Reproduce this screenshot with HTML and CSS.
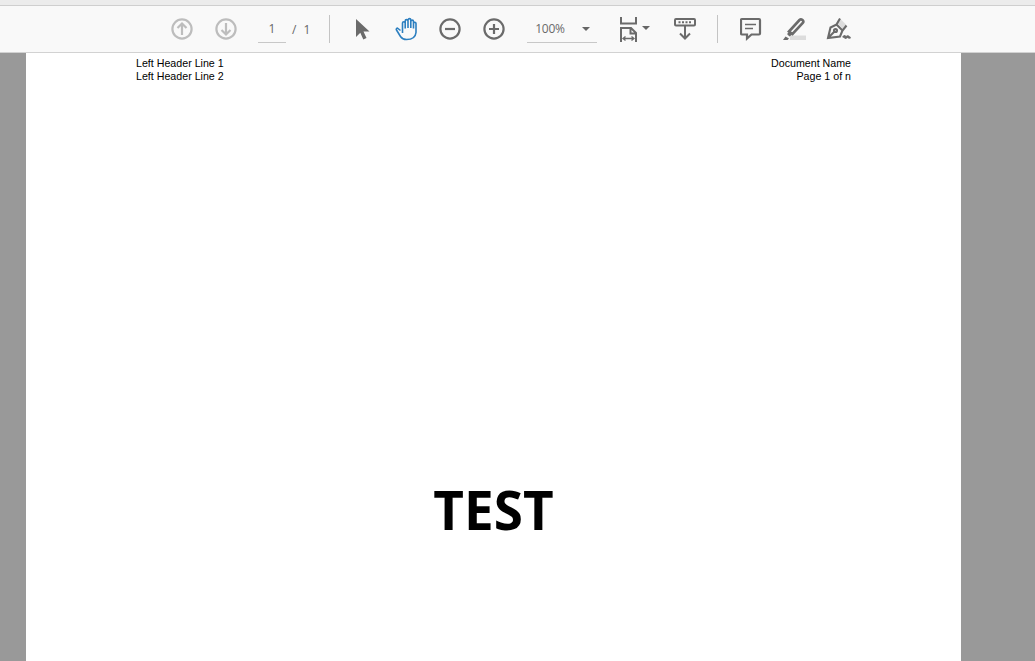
FILE: index.html
```html
<!DOCTYPE html>
<html lang="en">
<head>
<meta charset="utf-8">
<title>PDF viewer</title>
<link rel="stylesheet" href="styles.css">
</head>
<body>
<div class="strip"></div>
<div class="toolbar">
  <svg class="icon up" width="24" height="24" viewBox="0 0 24 24"><circle cx="12" cy="12" r="9.6"/><path d="M12 18V6.500M7.500 11 12 6.500l4.500 4.500"/></svg>
  <svg class="icon down" width="24" height="24" viewBox="0 0 24 24"><circle cx="12" cy="12" r="9.6"/><path d="M12 6v11.500M7.500 13l4.500 4.500 4.500-4.500"/></svg>
  <div class="pagebox">1</div>
  <div class="pagecount"><span>/</span><span>1</span></div>
  <div class="sep sep-a"></div>
  <svg class="cursor" width="16" height="22" viewBox="0 0 16 22"><path class="solid" d="M1 1v18l4.300-4.300 3 6.800 3.200-1.400-3-6.600h6z"/></svg>
  <svg class="hand" width="24" height="24" viewBox="0 0 24 24"><path d="M5.500 13.500 3 11.500c-1-.8-2.200.4-1.500 1.500l4 6.500c1.300 2 3 3 6 3 5 0 9-2 9.500-7V6.500c0-1.700-2.500-1.700-2.500 0V11.500M18.500 11V4.500c0-1.800-2.700-1.800-2.700 0V11M15.800 11V3c0-1.800-2.800-1.800-2.800 0v8M13 11V4c0-1.800-2.800-1.800-2.800 0v7.500M10.200 11.500V6c0-1.700-2.700-1.700-2.700 0v10"/></svg>
  <svg class="icon zoom-out" width="24" height="24" viewBox="0 0 24 24"><circle cx="12" cy="12" r="9.600"/><path d="M7 12h10"/></svg>
  <svg class="icon zoom-in" width="24" height="24" viewBox="0 0 24 24"><circle cx="12" cy="12" r="9.600"/><path d="M7 12h10M12 7v10"/></svg>
  <div class="zoombox"><span>100%</span><i class="caret"></i></div>
  <svg class="fit" width="20" height="25" viewBox="0 0 20 25"><path d="M2 0v6.500h15V0M2 25v-14h10l5 5v9M11.500 11v5.500H17"/><path class="thin" d="M4 21.500h11M6.500 19.500l-2.500 2 2.500 2M12.500 19.500l2.500 2-2.500 2"/></svg>
  <i class="caret caret-fit"></i>
  <svg class="stamp" width="24" height="24" viewBox="0 0 24 24"><rect x="2" y="2" width="20" height="6.500" rx="1"/><path d="M12 9v12.500M7 16.500l5 5 5-5"/><path class="dots" d="M5.500 5.200h13"/></svg>
  <div class="sep sep-b"></div>
  <svg class="comment" width="22" height="24" viewBox="0 0 22 24"><path d="M2 2h17a1 1 0 0 1 1 1v13.500a1 1 0 0 1-1 1h-7.500L7 21.500v-4H2a1 1 0 0 1-1-1V3a1 1 0 0 1 1-1z"/><path class="thin" d="M5 7.500h11M5 11.500h8"/></svg>
  <svg class="highlight" width="24" height="24" viewBox="0 0 24 24"><path class="band" d="M7 18.500h16V23H7z"/><path class="solid" d="M0 23l2.500-3.500 3.500 2-1.500 1.500zM4 17l3-3 3 3-3.500 2.500z"/><path d="M6 14.500 16.500 3c1.800-1.800 5 1 3.300 3L9.500 17z"/></svg>
  <svg class="sign" width="26" height="24" viewBox="0 0 26 24"><path class="band" d="M13.500 1 20 7.500l-3.500 4-6-6z"/><path d="M2 21 4.500 10.500 10.500 7.500l6 6-2.500 6zM2 21 8.500 14.500M10.500 7.500 14 1.500M16.500 13.500 20.500 8.500"/><circle cx="9.500" cy="13.500" r="1.500"/><path d="M17 20.500c1-1.500 2-2 2-.5s1.500.8 2-.2 1.500-.6 1.500.3 1 .7 2 0"/></svg>
</div>
<main class="viewer">
  <section class="page">
    <header class="page-head">
      <div>Left Header Line 1<br>Left Header Line 2</div>
      <div class="right">Document Name<br>Page 1 of n</div>
    </header>
    <h1 class="title">TEST</h1>
  </section>
</main>
</body>
</html>
```
FILE: styles.css
```css
* { box-sizing: border-box; }
html, body { margin: 0; height: 100%; overflow: hidden; }
body { width: 1035px; height: 661px; display: flex; flex-direction: column; background: #999; font-family: "Liberation Sans", Arial, sans-serif; }
.strip { height: 6px; flex: none; background: #ececec; border-bottom: 1px solid #cfcfcf; }
.toolbar { height: 47px; flex: none; display: flex; align-items: center; background: #f9f9f9; border-bottom: 1px solid #d2d2d2; padding-left: 170px; color: #666; }
svg { flex: none; display: block; fill: none; stroke: #6b6b6b; stroke-width: 2.2; }
svg .solid { fill: #6b6b6b; stroke: none; }
svg .thin { stroke-width: 1.3; }
svg .band { fill: #dcdcdc; stroke: none; }
.up, .down { stroke: #bdbdbd; }
.down { margin-left: 20px; }
.pagebox { width: 28px; height: 28px; margin-left: 20px; border-bottom: 1px solid #c8c8c8; text-align: center; font-size: 12px; line-height: 27px; font-family: "Open Sans", sans-serif; }
.pagecount { margin-left: 6px; display: flex; gap: 7px; font-size: 12px; font-family: "Open Sans", sans-serif; }
.sep { width: 1px; height: 28px; background: #c4c4c4; flex: none; }
.sep-a { margin-left: 19px; }
.cursor { margin-left: 25px; stroke: none; }
.hand { margin-left: 24px; stroke: #2c7fc0; stroke-width: 1.6; stroke-linejoin: round; }
.zoom-out { margin-left: 19px; }
.zoom-in { margin-left: 20px; }
.zoombox { width: 70px; height: 28px; margin-left: 21px; border-bottom: 1px solid #c8c8c8; display: flex; align-items: center; justify-content: space-between; padding: 0 7px 0 8px; font-size: 12px; font-family: "Open Sans", sans-serif; color: #6a6a6a; letter-spacing: -0.3px; }
.caret { display: block; width: 0; height: 0; border-left: 4px solid transparent; border-right: 4px solid transparent; border-top: 4px solid #666; flex: none; }
.fit { margin-left: 22px; stroke-width: 2; }
.caret-fit { margin-left: 3px; margin-bottom: 2px; }
.stamp { margin-left: 23px; stroke-width: 2; }
.stamp .dots { stroke-width: 2; stroke-dasharray: 2 1.5; }
.sep-b { margin-left: 20px; }
.comment { margin-left: 22px; stroke-width: 2.2; }
.highlight { margin-left: 21px; stroke-width: 2.6; }
.sign { margin-left: 19px; stroke-width: 2.1; }
.viewer { flex: 1; display: flex; justify-content: flex-start; min-height: 0; padding-left: 26px; }
.page { width: 935px; height: 100%; background: #fff; padding: 4px 110px 0; color: #000; }
.page-head { display: flex; justify-content: space-between; font-size: 10.67px; line-height: 13px; }
.right { text-align: right; }
.title { margin: 397px 0 0; text-align: center; font-family: "Open Sans", sans-serif; font-weight: 700; font-size: 53px; line-height: 60px; }
```
